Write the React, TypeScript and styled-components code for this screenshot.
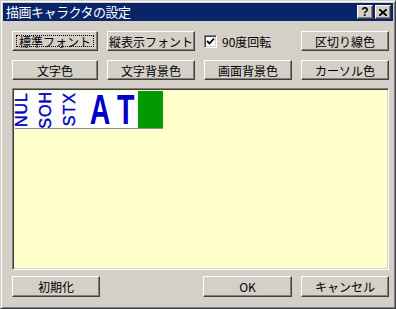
import styled, { createGlobalStyle } from "styled-components";

const GlobalStyle = createGlobalStyle`
  html, body {
    margin: 0;
    padding: 0;
    background: #d4d0c8;
  }
  body {
    font-family: "Noto Sans CJK JP", "Liberation Sans", sans-serif;
    font-size: 12px;
  }
`;

const Window = styled.div`
  width: 396px;
  height: 309px;
  box-sizing: border-box;
  background: #d4d0c8;
  border: 1px solid;
  border-color: #d4d0c8 #404040 #404040 #d4d0c8;
  box-shadow: inset 1px 1px 0 #ffffff, inset -1px -1px 0 #808080;
  padding: 2px;
  display: flex;
  flex-direction: column;
`;

const TitleBar = styled.div`
  height: 18px;
  background: #0a246a;
  display: flex;
  align-items: center;
  padding: 0 2px 0 3px;
`;

const Title = styled.div`
  flex: 1;
  color: #ffffff;
  font-size: 13px;
  line-height: 18px;
  letter-spacing: -0.5px;
`;

const CaptionButton = styled.div<{ $gap?: number }>`
  width: 16px;
  height: 14px;
  box-sizing: border-box;
  margin-left: ${(p) => p.$gap ?? 0}px;
  background: #d4d0c8;
  border: 1px solid;
  border-color: #ffffff #404040 #404040 #ffffff;
  box-shadow: inset -1px -1px 0 #808080;
  display: flex;
  align-items: center;
  justify-content: center;
  font-family: "Liberation Sans", sans-serif;
  font-weight: bold;
  font-size: 12px;
  line-height: 12px;
  color: #000;
`;

const Body = styled.div`
  flex: 1;
  display: flex;
  flex-direction: column;
  padding: 10px 4px 0 9px;
`;

const ButtonGrid = styled.div`
  display: grid;
  grid-template-columns: 86px 88px 88px 88px;
  grid-auto-rows: 20px;
  column-gap: 9px;
  row-gap: 9px;
`;

const Button = styled.button<{ $focus?: boolean }>`
  box-sizing: border-box;
  height: 20px;
  margin: 0;
  padding: 0;
  background: #d4d0c8;
  border: 1px solid;
  border-color: #ffffff #404040 #404040 #ffffff;
  box-shadow: inset -1px -1px 0 #808080;
  font-family: "Noto Sans CJK JP", "Liberation Sans", sans-serif;
  font-size: 12px;
  color: #000;
  display: flex;
  align-items: center;
  justify-content: center;
  position: relative;
  &::after {
    content: "";
    display: ${(p) => (p.$focus ? "block" : "none")};
    position: absolute;
    inset: 3px;
    border: 1px dotted #000;
  }
`;

const CheckRow = styled.label`
  display: flex;
  align-items: center;
  gap: 5px;
  font-size: 12px;
  color: #000;
`;

const CheckBox = styled.span`
  width: 13px;
  height: 13px;
  box-sizing: border-box;
  background: #fff;
  border: 1px solid;
  border-color: #808080 #ffffff #ffffff #808080;
  box-shadow: inset 1px 1px 0 #404040, inset -1px -1px 0 #d4d0c8;
  display: flex;
  align-items: center;
  justify-content: center;
`;

const Preview = styled.div`
  margin-top: 8px;
  height: 182px;
  width: 377px;
  box-sizing: border-box;
  background: #ffffcc;
  border: 1px solid;
  border-color: #808080 #ffffff #ffffff #808080;
  box-shadow: inset 1px 1px 0 #404040, inset -1px -1px 0 #d4d0c8;
  padding: 2px;
`;

const SampleStrip = styled.div`
  display: flex;
  width: 148px;
  height: 37px;
  background: #ffffff;
  border-bottom: 1px solid #909090;
`;

const Cell = styled.div<{ $w: number; $bg?: string; $left?: boolean }>`
  width: ${(p) => p.$w}px;
  height: 37px;
  flex-shrink: 0;
  background: ${(p) => p.$bg ?? "transparent"};
  display: flex;
  align-items: center;
  justify-content: ${(p) => (p.$left ? "flex-start" : "center")};
  padding-left: ${(p) => (p.$left ? 1 : 0)}px;
  box-sizing: border-box;
`;

const Ctrl = styled.div`
  writing-mode: vertical-rl;
  transform: rotate(180deg);
  font-family: "Liberation Sans", sans-serif;
  font-size: 16px;
  line-height: 12px;
  letter-spacing: 1px;
  color: #0000c0;
  -webkit-text-stroke: 0.4px #0000c0;
  white-space: nowrap;
`;

const Big = styled.div`
  font-family: "Liberation Sans", sans-serif;
  font-weight: bold;
  font-size: 42px;
  line-height: 37px;
  color: #0000c8;
  transform: scaleX(0.68);
`;

const Footer = styled.div`
  display: grid;
  grid-template-columns: 88px 1fr 89px 88px;
  column-gap: 9px;
  margin-top: 6px;
  width: 377px;
`;

const FooterButton = styled(Button)`
  height: 21px;
`;

export default function App() {
  return (
    <>
      <GlobalStyle />
      <Window>
        <TitleBar>
          <Title>描画キャラクタの設定</Title>
          <CaptionButton>?</CaptionButton>
          <CaptionButton $gap={2}>
            <svg width="8" height="7" viewBox="0 0 8 7">
              <path d="M0 0 L8 7 M8 0 L0 7" stroke="#000" strokeWidth="1.8" />
            </svg>
          </CaptionButton>
        </TitleBar>
        <Body>
          <ButtonGrid>
            <Button $focus>標準フォント</Button>
            <Button>縦表示フォント</Button>
            <CheckRow>
              <CheckBox>
                <svg width="9" height="9" viewBox="0 0 9 9">
                  <path d="M1 4 L3.5 6.5 L8 1.5" stroke="#000" strokeWidth="1.8" fill="none" />
                </svg>
              </CheckBox>
              90度回転
            </CheckRow>
            <Button>区切り線色</Button>
            <Button>文字色</Button>
            <Button>文字背景色</Button>
            <Button>画面背景色</Button>
            <Button>カーソル色</Button>
          </ButtonGrid>
          <Preview>
            <SampleStrip>
              <Cell $w={24} $left>
                <Ctrl>NUL</Ctrl>
              </Cell>
              <Cell $w={24} $left>
                <Ctrl>SOH</Ctrl>
              </Cell>
              <Cell $w={24} $left>
                <Ctrl>STX</Ctrl>
              </Cell>
              <Cell $w={26}>
                <Big>A</Big>
              </Cell>
              <Cell $w={25}>
                <Big>T</Big>
              </Cell>
              <Cell $w={25} $bg="#009a00" />
            </SampleStrip>
          </Preview>
          <Footer>
            <FooterButton>初期化</FooterButton>
            <span />
            <FooterButton>OK</FooterButton>
            <FooterButton>キャンセル</FooterButton>
          </Footer>
        </Body>
      </Window>
    </>
  );
}
